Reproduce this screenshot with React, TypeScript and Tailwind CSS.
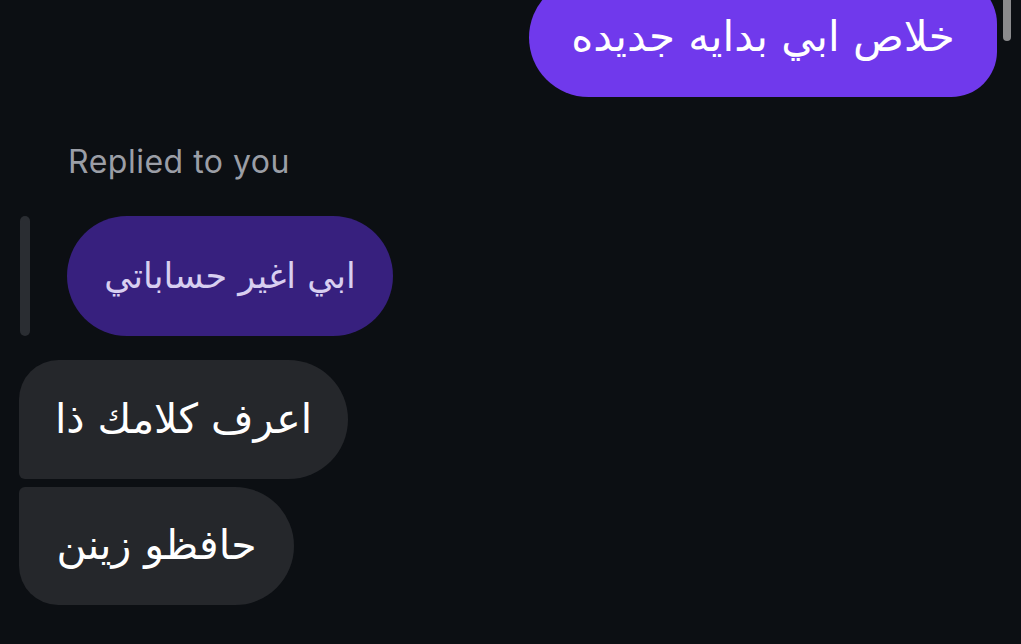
export default function App() {
  return (
    <div
      className="relative h-[644px] w-[1021px] overflow-hidden bg-[#0c0f13]"
      style={{ fontFamily: '"DejaVu Sans", "Noto Sans", sans-serif' }}
    >
      {/* scrollbar thumb */}
      <div className="absolute right-[10px] top-[-6px] h-[47px] w-[8px] rounded-full bg-[#8b8b8d]" />

      <div className="flex flex-col">
        {/* outgoing */}
        <div className="flex justify-end pr-[24px]">
          <div
            dir="rtl"
            className="-mt-[22px] flex h-[119px] w-[468px] items-center justify-center rounded-l-[60px] rounded-br-[46px] rounded-tr-[46px] bg-[#7039ec] pb-[3px] text-[42px] text-white"
          >
            خلاص ابي بدايه جديده
          </div>
        </div>

        {/* replied label */}
        <div
          className="mt-[47px] pl-[68px] text-[32px] leading-[36px] tracking-[0.5px] text-[#9b9ea6]"
          style={{ fontFamily: 'Inter, "Noto Sans", sans-serif' }}
        >
          Replied to you
        </div>

        {/* quoted message */}
        <div className="mt-[36px] flex items-stretch pl-[20px]">
          <div className="w-[10px] rounded-full bg-[#2a2d32]" />
          <div
            dir="rtl"
            className="ml-[37px] flex h-[120px] w-[326px] items-center justify-center rounded-full bg-[#37207e] text-[35px] text-[#d8cff0]"
          >
            ابي اغير حساباتي
          </div>
        </div>

        {/* incoming */}
        <div className="mt-[24px] flex flex-col items-start gap-[8px] pl-[19px]">
          <div
            dir="rtl"
            className="flex h-[119px] w-[329px] items-center justify-center rounded-r-[60px] rounded-bl-[6px] rounded-tl-[40px] bg-[#25272b] text-[41px] text-white"
          >
            اعرف كلامك ذا
          </div>
          <div
            dir="rtl"
            className="flex h-[118px] w-[275px] items-center justify-center rounded-r-[60px] rounded-bl-[40px] rounded-tl-[6px] bg-[#25272b] text-[41px] text-white"
          >
            حافظو زينن
          </div>
        </div>
      </div>
    </div>
  );
}
